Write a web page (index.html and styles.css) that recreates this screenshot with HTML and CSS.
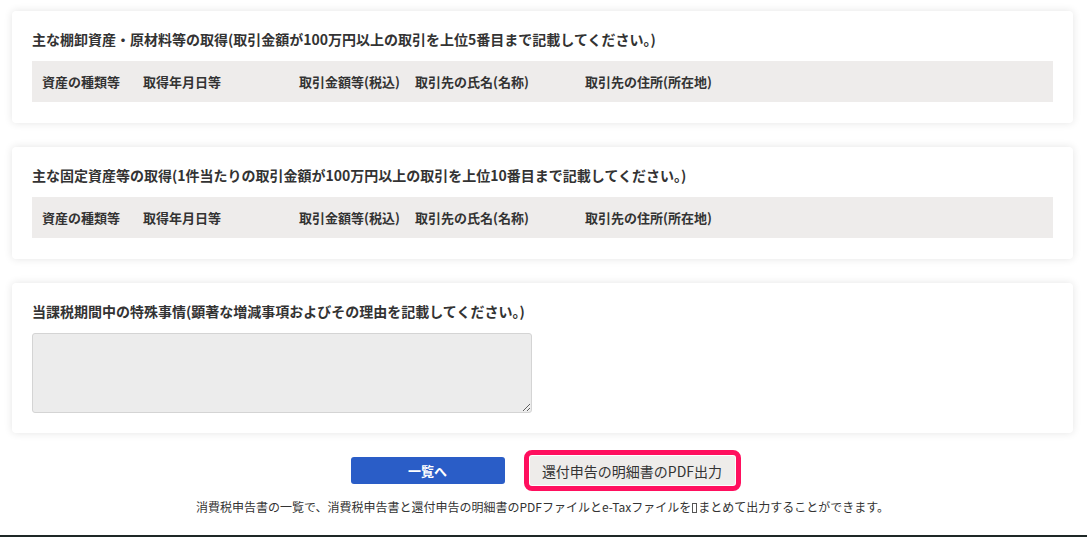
FILE: index.html
```html
<!DOCTYPE html>
<html lang="ja">
<head>
<meta charset="utf-8">
<title>還付申告の明細書</title>
<link rel="stylesheet" href="styles.css">
</head>
<body>
<div class="page">
  <section class="card">
    <h2 class="card-title">主な棚卸資産・原材料等の取得(取引金額が100万円以上の取引を上位5番目まで記載してください。)</h2>
    <div class="table-head">
      <span>資産の種類等</span>
      <span>取得年月日等</span>
      <span>取引金額等(税込)</span>
      <span>取引先の氏名(名称)</span>
      <span>取引先の住所(所在地)</span>
    </div>
  </section>

  <section class="card">
    <h2 class="card-title">主な固定資産等の取得(1件当たりの取引金額が100万円以上の取引を上位10番目まで記載してください。)</h2>
    <div class="table-head">
      <span>資産の種類等</span>
      <span>取得年月日等</span>
      <span>取引金額等(税込)</span>
      <span>取引先の氏名(名称)</span>
      <span>取引先の住所(所在地)</span>
    </div>
  </section>

  <section class="card">
    <h2 class="card-title">当課税期間中の特殊事情(顕著な増減事項およびその理由を記載してください。)</h2>
    <textarea class="memo" disabled></textarea>
  </section>

  <div class="actions">
    <button class="btn btn-primary" type="button">一覧へ</button>
    <span class="highlight"><button class="btn btn-secondary" type="button">還付申告の明細書のPDF出力</button></span>
  </div>
  <p class="note">消費税申告書の一覧で、消費税申告書と還付申告の明細書のPDFファイルとe-Taxファイルを<span class="tofu"></span>まとめて出力することができます。</p>
</div>
<div class="footer-line"></div>
</body>
</html>
```

FILE: styles.css
```css
html, body {
  margin: 0;
  padding: 0;
  background: #ffffff;
}

body {
  font-family: "Noto Sans CJK JP", "Noto Sans", sans-serif;
  color: #333333;
  height: 537px;
  display: flex;
  flex-direction: column;
}

.page {
  flex: 1;
  padding: 11px 14px 0 12px;
  display: flex;
  flex-direction: column;
  gap: 24px;
}

.card {
  background: #ffffff;
  border-radius: 4px;
  box-shadow: 0 0 8px rgba(0, 0, 0, 0.11);
  padding: 18px 20px 21px 20px;
}

.card-title {
  margin: 0 0 12px 0;
  font-size: 14px;
  line-height: 20px;
  font-weight: 700;
  color: #333333;
}

.table-head {
  background: #eeeceb;
  height: 41px;
  display: grid;
  grid-template-columns: 101px 156px 116px 170px 1fr;
  align-items: center;
  padding-left: 10px;
  font-size: 13px;
  font-weight: 700;
  color: #333333;
}

.memo {
  display: block;
  width: 500px;
  height: 80px;
  box-sizing: border-box;
  background: #ececec;
  border: 1px solid #d4d4d4;
  border-radius: 3px;
  resize: both;
  margin: 0;
  margin-bottom: -1px;
}

.actions {
  display: flex;
  justify-content: center;
  align-items: center;
  gap: 19px;
  margin-top: -7px;
  height: 41px;
  padding-left: 6px;
}

.btn {
  font-family: "Noto Sans CJK JP", "Noto Sans", sans-serif;
  font-size: 13px;
  border-radius: 3px;
  cursor: pointer;
}

.btn-primary {
  width: 154px;
  height: 27px;
  background: #2a5dc7;
  color: #ffffff;
  border: none;
  font-weight: 700;
}

.highlight {
  display: inline-flex;
  border: 5px solid #ff0f5e;
  border-radius: 8px;
  padding: 1px;
}

.btn-secondary {
  width: 205px;
  height: 29px;
  background: #eeecea;
  color: #333333;
  border: none;
  border-radius: 2px;
  font-size: 14px;
}

.note {
  margin: -17px 0 0 0;
  text-align: center;
  font-size: 12px;
  line-height: 18px;
  color: #333333;
}

.tofu {
  display: inline-block;
  width: 3px;
  height: 8px;
  border: 1px solid #555;
  margin: 0 1px;
  vertical-align: -1px;
}

.footer-line {
  height: 2px;
  background: #1e2826;
}
```
